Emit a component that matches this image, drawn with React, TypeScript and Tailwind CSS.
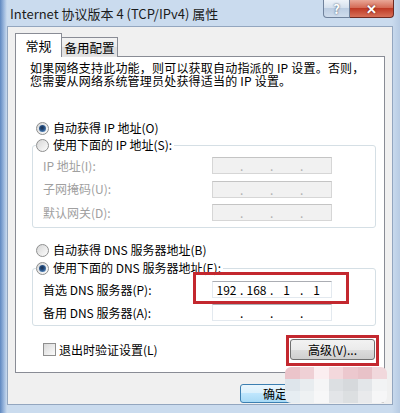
import React from 'react';

const FONT = "font-['Noto_Sans_CJK_SC','Noto_Sans',sans-serif]";

function Radio({ checked }: { checked?: boolean }) {
  return (
    <span className="flex h-[13px] w-[13px] shrink-0 items-center justify-center rounded-full border border-[#8e8f8f] bg-[linear-gradient(135deg,#d6d6d6,#fdfdfd)]">
      {checked && (
        <span className="h-[7px] w-[7px] rounded-full bg-[radial-gradient(circle_at_45%_40%,#1b2f4a_0,#21487a_35%,#6ea6dc_100%)]" />
      )}
    </span>
  );
}

function IpBox({ parts, disabled }: { parts?: string[]; disabled?: boolean }) {
  const vals = parts ?? ['', '', '', ''];
  return (
    <div
      className={
        disabled
          ? 'flex h-[17px] w-[120px] items-center border border-[#d6d6d6] border-t-[#c4c4c4] bg-[#f1f1f1] text-[#b0b0b0]'
          : 'flex h-[17px] w-[120px] items-center border border-[#e3e9ef] border-t-[#abadb3] bg-white text-black'
      }
    >
      {vals.map((v, i) => (
        <React.Fragment key={i}>
          <span className="w-[27px] text-center leading-[15px]">{v}</span>
          {i < 3 && <span className="w-[3px] text-center leading-[15px]">.</span>}
        </React.Fragment>
      ))}
    </div>
  );
}

function Row({ label, disabled, parts }: { label: string; disabled?: boolean; parts?: string[] }) {
  return (
    <div className="flex h-[17px] items-center">
      <span className={'w-[179px] pl-[10px] leading-[14px] ' + (disabled ? 'text-[#a0a0a0]' : 'text-black')}>{label}</span>
      <IpBox parts={parts} disabled={disabled} />
    </div>
  );
}

const wmColors = [
  ['#ebc4ca', '#efd0d5', '#fbeef0', '#f3d8dc', '#ecc8ce', '#e8c2c8', '#f1d8dc'],
  ['#dee5eb', '#e8ecef', '#f5f5f6', '#dcdfe2', '#d6d9dc', '#e3e6e9', '#f2f3f4'],
  ['#e6edf2', '#eef1f3', '#f7f7f8', '#e3e5e8', '#dcdfe1', '#e9eaec', '#f6f6f7'],
];

export default function App() {
  return (
    <div className={`relative h-[413px] w-[400px] overflow-hidden bg-[linear-gradient(90deg,#5f88c0_0,#9db9de_4px,#cadbee_7px,#cadbee_392px,#b7cbe3_400px)] text-[12px] text-black ${FONT}`}>
      {/* title bar */}
      <div className="flex h-[26px] items-start">
        <div className="pl-[10px] pt-[5px] text-[13px] leading-[17px] text-[#1b1b1b]">Internet 协议版本 4 (TCP/IPv4) 属性</div>
        <div className="ml-auto mr-[6px] flex">
          <div className="flex h-[18px] w-[27px] items-center justify-center rounded-bl-[4px] border border-t-0 border-[#70829c] bg-[linear-gradient(#eef3f9,#d3dfed_50%,#bccde2_50%,#cfdcec)] text-[13px] font-bold leading-none text-white [text-shadow:0_0_2px_#2c3e57]">
            ?
          </div>
          <div className="flex h-[18px] w-[44px] items-center justify-center rounded-br-[4px] border border-l-0 border-t-0 border-[#6e2a22] bg-[linear-gradient(#e9a797,#d2644e_50%,#bf3a25_50%,#d77058)] text-[13px] font-bold leading-none text-white [text-shadow:0_0_2px_#5a150c]">
            ✕
          </div>
        </div>
      </div>

      {/* client area */}
      <div className="mx-[7px] h-[379px] border border-[#93a6bf] bg-[#f0f0f0] px-[7px] pt-[6px]">
        {/* tabs */}
        <div className="relative z-10 -mb-px flex h-[24px] items-end">
          <div className="flex h-[24px] w-[47px] items-start justify-center border border-b-0 border-[#898c95] bg-white pt-[4px] text-[13px] leading-[16px]">
            常规
          </div>
          <div className="flex h-[20px] w-[56px] items-start justify-center border border-b-0 border-l-0 border-[#898c95] bg-[linear-gradient(#f3f3f3,#ebebeb_50%,#dedede_50%,#e4e4e4)] pt-[2px] text-[12.5px] leading-[16px]">
            备用配置
          </div>
        </div>

        {/* tab panel */}
        <div className="flex h-[317px] flex-col border border-[#898c95] bg-white">
          <div className="pl-[14px] pt-[4px] text-[12px] leading-[13px] tracking-[0.2px]">
            <div>如果网络支持此功能，则可以获取自动指派的 IP 设置。否则，</div>
            <div>您需要从网络系统管理员处获得适当的 IP 设置。</div>
          </div>

          <div className="ml-[20px] mt-[34px] flex h-[14px] items-center gap-[4px]">
            <Radio checked />
            <span>自动获得 IP 地址(O)</span>
          </div>

          <div className="ml-[16px] mr-[8px] mt-[10px] flex flex-col rounded-[3px] border border-[#d5dfe5] pb-[6px]">
            <div className="-mt-[8px] ml-[3px] flex h-[14px] w-fit items-center gap-[4px] bg-white pr-[2px]">
              <Radio />
              <span>使用下面的 IP 地址(S):</span>
            </div>
            <div className="mt-[5px] flex flex-col gap-[6.5px]">
              <Row label="IP 地址(I):" disabled />
              <Row label="子网掩码(U):" disabled />
              <Row label="默认网关(D):" disabled />
            </div>
          </div>

          <div className="ml-[20px] mt-[15px] flex h-[14px] items-center gap-[4px]">
            <Radio />
            <span>自动获得 DNS 服务器地址(B)</span>
          </div>

          <div className="ml-[16px] mr-[8px] mt-[11px] flex flex-col rounded-[3px] border border-[#d5dfe5] pb-[4px]">
            <div className="-mt-[8px] ml-[3px] flex h-[14px] w-fit items-center gap-[4px] bg-white pr-[2px]">
              <Radio checked />
              <span>使用下面的 DNS 服务器地址(E):</span>
            </div>
            <div className="mt-[6px] flex flex-col gap-[6px]">
              <Row label="首选 DNS 服务器(P):" parts={['192', '168', '1', '1']} />
              <Row label="备用 DNS 服务器(A):" />
            </div>
          </div>

          <div className="ml-[27px] mr-[9px] mt-[13px] flex h-[21px] items-center">
            <span className="h-[13px] w-[13px] border border-[#8f8f8f] bg-[linear-gradient(135deg,#d9d9d9,#fbfbfb)]" />
            <span className="ml-[3px]">退出时验证设置(L)</span>
            <button className="ml-auto h-[21px] w-[85px] rounded-[3px] border border-[#707070] bg-[linear-gradient(#f2f2f2,#ebebeb_50%,#dddddd_50%,#cfcfcf)] text-[12px]">
              高级(V)...
            </button>
          </div>
        </div>

        {/* dialog buttons */}
        <div className="mt-[11px] flex justify-end gap-[5px]">
          <button className="h-[19px] w-[70px] rounded-[3px] border border-[#3c7fb1] bg-[linear-gradient(#eaf6fd,#d9f0fc_50%,#bee6fd_50%,#a7d9f5)] text-[12px] leading-none">
            确定
          </button>
          <button className="h-[19px] w-[70px] rounded-[3px] border border-[#707070] bg-[linear-gradient(#f2f2f2,#ebebeb_50%,#dddddd_50%,#cfcfcf)] text-[12px] leading-none">
            取消
          </button>
        </div>
      </div>

      {/* red annotation boxes */}
      <div className="absolute left-[193px] top-[272px] h-[32px] w-[156px] border-[3px] border-[#c3282f]" />
      <div className="absolute left-[286px] top-[335px] h-[31px] w-[93px] border-[3px] border-[#c3282f]" />

      {/* pixelated watermark */}
      <div className="absolute left-[285px] top-[367px] grid h-[36px] w-[102px] grid-cols-7 grid-rows-3 overflow-hidden rounded-[6px]">
        {wmColors.flat().map((c, i) => (
          <div key={i} style={{ backgroundColor: c }} />
        ))}
      </div>
    </div>
  );
}
